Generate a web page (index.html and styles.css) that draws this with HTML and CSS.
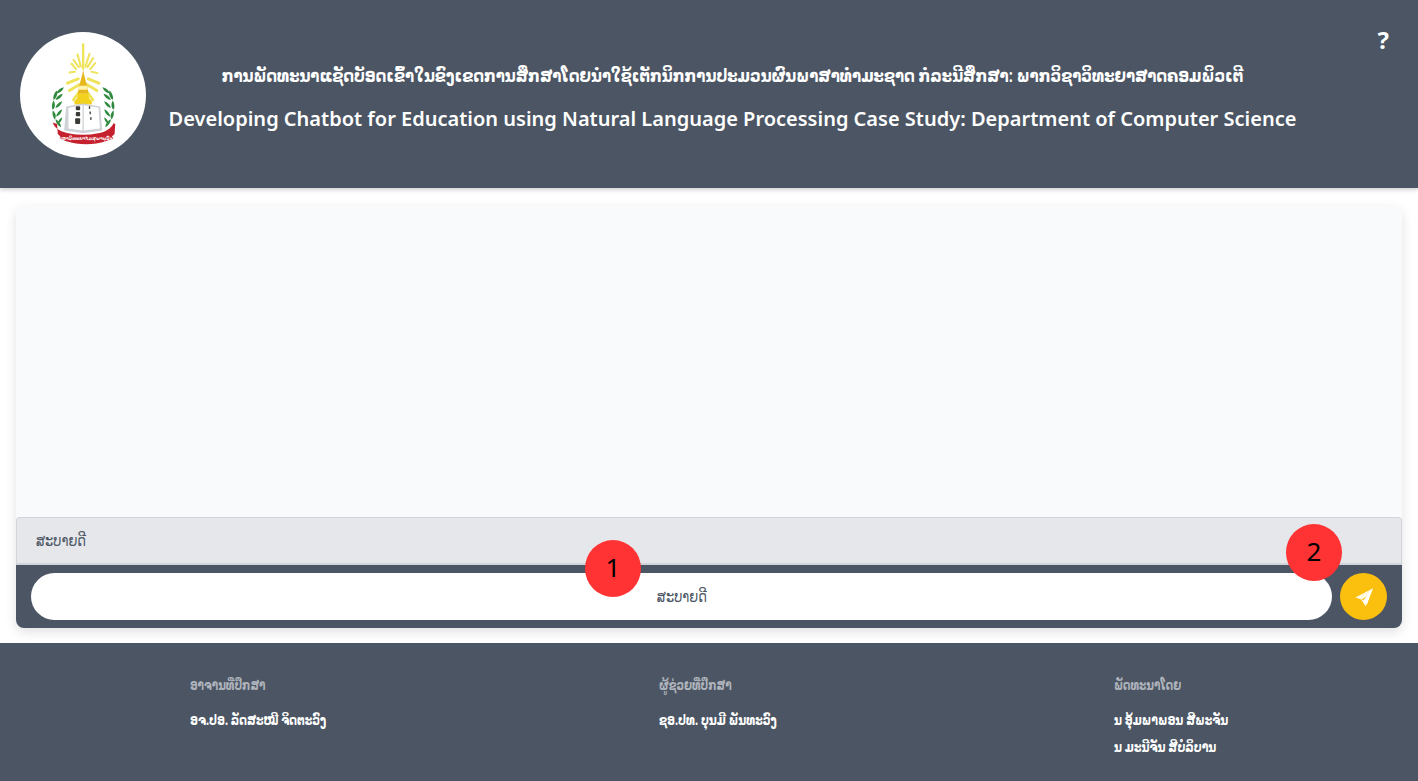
FILE: index.html
```html
<!DOCTYPE html>
<html lang="lo">
<head>
<meta charset="utf-8">
<title>Chatbot</title>
<link rel="stylesheet" href="styles.css">
</head>
<body>
<header class="header">
  <div class="logo">
    <svg viewBox="58 65 377 377" width="126" height="126">
      <circle cx="246.5" cy="253.5" r="188.5" fill="#fff"/>
      <g stroke="#efe35a" stroke-linecap="round" fill="none">
        <path stroke-width="7" d="M247 102V175"/>
        <path stroke-width="6" d="M234 170L218 148M226 176L212 160M222 184L206 186M260 170L277 143M268 176L283 158M272 184L290 188M240 168L230 132M254 168L266 130"/>
        <path stroke-width="9" d="M232 205L200 218M236 222L206 240M240 238L218 268M262 205L294 218M258 222L288 240M254 238L276 268"/>
      </g>
      <path d="M247 178c3 18 8 34 12 48l4 24h-32l4-24c4-14 9-30 12-48z" fill="#e6b81e"/>
      <path d="M236 226h22l3 12h-28z" fill="#fff3b0"/>
      <path d="M232 250h30l3 14 8 8v10h-52v-10l8-8z" fill="#f2d21e"/>
      <path d="M196 288l51-9 51 9 6 72-57 8-57-8z" fill="#cfd2d6"/>
      <path d="M203 292l42-8v76l-42-6z" fill="#fff"/>
      <path d="M249 284l44 8 4 62-48 6z" fill="#fff"/>
      <g fill="#3c3a36">
        <rect x="225" y="287" width="13" height="12" rx="3"/>
        <rect x="225" y="304" width="13" height="13" rx="3"/>
        <rect x="223" y="323" width="15" height="17" rx="3"/>
        <rect x="264" y="287" width="4" height="8"/>
        <rect x="266" y="303" width="4" height="8"/>
        <rect x="268" y="320" width="4" height="8"/>
      </g>
      <g fill="#2f8a3e">
        <path d="M189 230c-10 2-18 8-22 18 8 0 18-6 22-18z"/>
        <path d="M168 240c-8 8-12 18-10 28 8-4 14-16 10-28z"/>
        <path d="M186 250c-10 2-18 8-22 18 8 0 18-6 22-18z"/>
        <path d="M158 270c-5 10-6 20-2 28 7-6 9-18 2-28z"/>
        <path d="M184 272c-10 3-17 10-20 20 8-1 17-8 20-20z"/>
        <path d="M156 300c-2 10 0 20 6 27 5-8 4-19-6-27z"/>
        <path d="M184 296c-10 4-16 12-18 22 8-2 16-10 18-22z"/>
        <path d="M164 326c0 8 6 18 16 24 2-8-6-20-16-24z"/>
        <path d="M184 320c-8 4-12 12-13 19 7-2 13-9 13-19z"/>
        <path d="M305 230c10 2 18 8 22 18-8 0-18-6-22-18z"/>
        <path d="M326 240c8 8 12 18 10 28-8-4-14-16-10-28z"/>
        <path d="M308 250c10 2 18 8 22 18-8 0-18-6-22-18z"/>
        <path d="M336 270c5 10 6 20 2 28-7-6-9-18-2-28z"/>
        <path d="M310 272c10 3 17 10 20 20-8-1-17-8-20-20z"/>
        <path d="M338 300c2 10 0 20-6 27-5-8-4-19 6-27z"/>
        <path d="M310 296c10 4 16 12 18 22-8-2-16-10-18-22z"/>
        <path d="M330 326c0 8-6 18-16 24-2-8 6-20 16-24z"/>
        <path d="M310 320c8 4 12 12 13 19-7-2-13-9-13-19z"/>
      </g>
      <path d="M156 336c6 18 24 28 46 32 30 6 60 6 90 0 22-4 38-14 46-30l5 2-2 30-8 8 4 6-22 8c-36 12-82 12-118 0l-22-8 4-6-8-8-2-30z" fill="#c4202e"/>
      <text class="ribbon-text" x="247" y="388" text-anchor="middle">ມະຫາວິທະຍາໄລສຸພານຸວົງ</text>
    </svg>
  </div>
  <div class="titles">
    <h1 class="title-lao">ການພັດທະນາແຊັດບັອດເຂົ້າໃນຂົງເຂດການສຶກສາໂດຍນຳໃຊ້ເຕັກນິກການປະມວນຜົນພາສາທຳມະຊາດ ກໍລະນີສຶກສາ: ພາກວິຊາວິທະຍາສາດຄອມພິວເຕີ</h1>
    <h2 class="title-en">Developing Chatbot for Education using Natural Language Processing Case Study: Department of Computer Science</h2>
  </div>
  <span class="help">?</span>
</header>

<main class="main">
  <section class="panel">
    <div class="messages"></div>
    <div class="suggestion"><span class="lao-small">ສະບາຍດີ</span></div>
    <div class="input-bar">
      <div class="input"><span class="lao-small lao-center">ສະບາຍດີ</span></div>
      <button class="send" type="button" aria-label="send">
        <svg viewBox="341 231 56 56" width="19" height="19"><path d="M397 235 345 262l17 6 13 20 5-9 6-22-14 16-8-5 26-18z" fill="#fff8e1"/><path d="M397 235 367 272l13 8z" fill="#fff"/></svg>
      </button>
    </div>
    <span class="badge badge-one">1</span>
    <span class="badge badge-two">2</span>
  </section>
</main>

<footer class="footer">
  <div class="col col-a">
    <h3 class="col-head"><span class="squeeze-head">ອາຈານທີ່ປຶກສາ</span></h3>
    <p class="col-name"><span class="squeeze-name">ອຈ.ປອ. ລັດສະໝີ ຈິດຕະວົງ</span></p>
  </div>
  <div class="col col-b">
    <h3 class="col-head"><span class="squeeze-head">ຜູ້ຊ່ວຍທີ່ປຶກສາ</span></h3>
    <p class="col-name"><span class="squeeze-name">ຊອ.ປທ. ບຸນມີ ພັນທະວົງ</span></p>
  </div>
  <div class="col col-c">
    <h3 class="col-head"><span class="squeeze-head">ພັດທະນາໂດຍ</span></h3>
    <p class="col-name"><span class="squeeze-name">ນ ອຸ້ມພາພອນ ສີພະຈັນ</span></p>
    <p class="col-name"><span class="squeeze-name">ນ ມະນີຈັນ ສີບໍລິບານ</span></p>
  </div>
</footer>
</body>
</html>
```
FILE: styles.css
```css
* { box-sizing: border-box; }
html, body { height: 100%; }
body {
  margin: 0;
  background: #fff;
  font-family: "Noto Sans", "DejaVu Sans", sans-serif;
  display: flex;
  flex-direction: column;
  overflow: hidden;
}
.header {
  height: 188px;
  background: #4b5563;
  color: #fff;
  display: flex;
  align-items: flex-start;
  padding: 32px 20px 0;
  position: relative;
  box-shadow: 0 2px 4px rgba(0,0,0,.18);
  flex: none;
  overflow: hidden;
}
.logo { width: 126px; height: 126px; flex: none; }
.logo svg { display: block; }
.ribbon-text { font-size: 14px; font-weight: 700; fill: #fff; }
.titles {
  flex: 1;
  min-width: 0;
  display: flex;
  flex-direction: column;
  align-items: center;
  padding: 28px 79px 0 0;
}
.title-lao {
  margin: 0;
  font-size: 18px;
  font-weight: 600;
  line-height: 30px;
  white-space: nowrap;
  transform: scaleX(.83);
}
.title-en { margin: 14px 0 0; font-size: 20px; font-weight: 600; line-height: 30px; white-space: nowrap; }
.help {
  position: absolute;
  right: 29px;
  top: 24px;
  font-size: 24px;
  font-weight: 700;
  line-height: 32px;
}
.main { height: 455px; padding: 18px 16px 15px; flex: none; }
.panel {
  position: relative;
  height: 100%;
  display: flex;
  flex-direction: column;
  border-radius: 8px;
  background: #f9fafb;
  box-shadow: 0 4px 12px rgba(0,0,0,.12);
}
.messages { flex: 1; }
.suggestion {
  height: 48px;
  background: #e5e7eb;
  border: 1px solid #d1d5db;
  border-bottom-width: 2px;
  border-radius: 4px 4px 0 0;
  padding: 0 19px;
  font-size: 16px;
  line-height: 45px;
  color: #4b5563;
}
.lao-small { display: inline-block; transform: scaleX(.81); transform-origin: left center; }
.lao-center { transform-origin: center; }
.input-bar {
  height: 63px;
  background: #4b5563;
  border-radius: 0 0 8px 8px;
  display: flex;
  align-items: flex-start;
  gap: 8px;
  padding: 8px 15px;
}
.input {
  flex: 1;
  height: 47px;
  background: #fff;
  border-radius: 24px;
  text-align: center;
  font-size: 16px;
  line-height: 47px;
  color: #4b5563;
  padding-left: 1px;
}
.send {
  width: 47px;
  height: 47px;
  border: 0;
  border-radius: 50%;
  background: #fbbf0e;
  display: flex;
  align-items: center;
  justify-content: center;
  padding: 0;
  flex: none;
}
.badge {
  position: absolute;
  width: 56px;
  height: 57px;
  border-radius: 50%;
  background: #ff3333;
  color: #000;
  font-family: "Noto Sans", sans-serif;
  font-size: 26px;
  line-height: 55px;
  text-align: center;
}
.badge-one { left: 569px; top: 334px; }
.badge-two { left: 1270px; top: 318px; }
.footer {
  flex: 1;
  background: #4b5563;
  position: relative;
  display: flex;
  padding: 32px 0 0 190px;
  color: #fff;
  overflow: hidden;
}
.col-a { width: 469px; }
.col-b { width: 455px; }
.col-head { margin: 0 0 15px; font-size: 14px; line-height: 20px; font-weight: 600; color: #aeb3bb; }
.col-name { margin: 0 0 7px; font-size: 14px; line-height: 20px; font-weight: 700; }
.squeeze-head, .squeeze-name { display: inline-block; transform-origin: left center; white-space: nowrap; }
.squeeze-head { transform: scaleX(.75); }
.squeeze-name { transform: scaleX(.78); }
```
